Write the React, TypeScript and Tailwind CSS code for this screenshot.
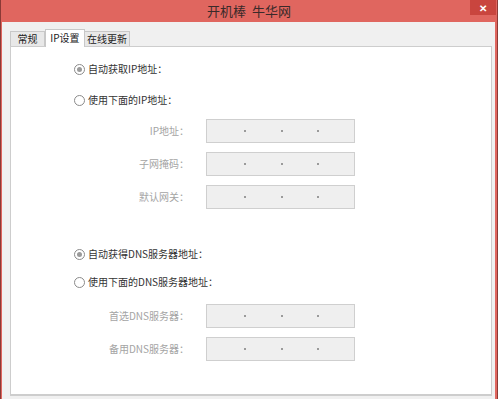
import React from 'react';

const font = { fontFamily: '"Noto Sans CJK SC", "Microsoft YaHei", sans-serif' };

const Radio = ({ checked, label }: { checked?: boolean; label: string }) => (
  <div className="flex items-center gap-[3px] h-[14px]">
    <span className="w-[11px] h-[11px] rounded-full border border-[#8a8a8a] bg-white flex items-center justify-center">
      {checked && <span className="w-[5px] h-[5px] rounded-full bg-[#9a9a9a]" />}
    </span>
    <span className="text-[10px] text-[#333] leading-none">{label}</span>
  </div>
);

const IpField = ({ label }: { label: string }) => (
  <div className="flex items-center h-[24px]">
    <span className="w-[178px] text-right text-[10px] text-[#a4a4a4] leading-none">{label}</span>
    <div className="ml-[17px] w-[149px] h-[24px] bg-[#efefef] border border-[#cfcfcf] flex items-center">
      <span className="ml-[37px] w-[2px] h-[2px] bg-[#9a9a9a]" />
      <span className="ml-[35px] w-[2px] h-[2px] bg-[#9a9a9a]" />
      <span className="ml-[34px] w-[2px] h-[2px] bg-[#9a9a9a]" />
    </div>
  </div>
);

export default function App() {
  return (
    <div className="w-[500px] h-[399px] bg-white overflow-hidden" style={font}>
      <div className="w-[498px] h-[399px] bg-[#e0665f] flex flex-col border-l border-r border-[#8b3a36]">
        <div className="h-[22px] flex items-start relative">
          <div className="flex-1 text-center text-[13px] leading-[22px] text-[#3a2a2a]">开机棒&nbsp;&nbsp;牛华网</div>
          <div className="absolute right-[1px] top-0 w-[26px] h-[15px] bg-[#c9453e] flex items-center justify-center text-white text-[10px] font-bold leading-none">✕</div>
        </div>
        <div className="flex-1 bg-[#f0f0f0] ml-[1px] mr-[2px] flex flex-col pt-[6px]">
          <div className="flex items-end ml-[8px] h-[18px]">
            <div className="h-[15px] w-[35px] border border-b-0 border-[#c8c8c8] bg-[#e8e8e8] text-[10px] leading-[14px] text-[#222] text-center">常规</div>
            <div className="h-[18px] w-[40px] border border-b-0 border-[#c8c8c8] bg-white text-[10px] leading-[16px] text-[#222] text-center relative top-[1px]">IP设置</div>
            <div className="h-[15px] w-[45px] border border-b-0 border-l-0 border-[#c8c8c8] bg-[#e8e8e8] text-[10px] leading-[14px] text-[#222] text-center">在线更新</div>
          </div>
          <div className="ml-[8px] w-[482px] h-[350px] bg-white border border-[#cdcdcd] border-b-[2px] pl-[63px] pt-[15px] flex flex-col">
            <Radio checked label="自动获取IP地址：" />
            <div className="h-[17px]" />
            <Radio label="使用下面的IP地址：" />
            <div className="flex flex-col gap-[9px] mt-[12px] -ml-[63px]">
              <IpField label="IP地址：" />
              <IpField label="子网掩码：" />
              <IpField label="默认网关：" />
            </div>
            <div className="h-[38px]" />
            <Radio checked label="自动获得DNS服务器地址：" />
            <div className="h-[14px]" />
            <Radio label="使用下面的DNS服务器地址：" />
            <div className="flex flex-col gap-[9px] mt-[15px] -ml-[63px]">
              <IpField label="首选DNS服务器：" />
              <IpField label="备用DNS服务器：" />
            </div>
          </div>
        </div>
      </div>
    </div>
  );
}
